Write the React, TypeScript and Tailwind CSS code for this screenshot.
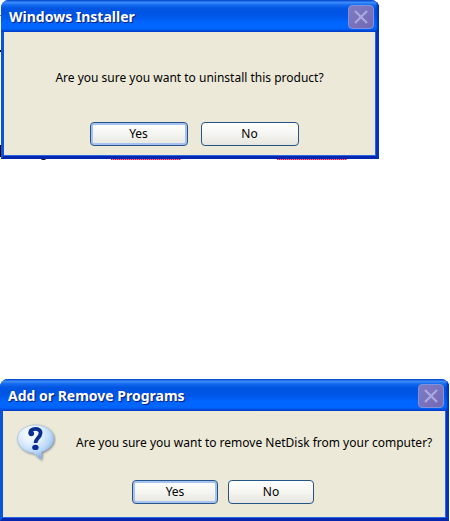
import type { ReactNode } from "react";
import clsx from "clsx";

function CloseButton() {
  return (
    <button
      aria-label="Close"
      className="flex h-6 w-[26px] shrink-0 items-center justify-center rounded-[4px] border border-[#8290e0] bg-linear-to-br from-[#7d7cc4] to-[#7468b4]"
      disabled
      type="button"
    >
      <svg aria-hidden="true" className="h-4 w-4" viewBox="0 0 16 16">
        <path d="M2 2 14 14M14 2 2 14" fill="none" stroke="#a9a8de" strokeWidth="2.4" />
      </svg>
    </button>
  );
}

function QuestionIcon() {
  return (
    <svg aria-hidden="true" className="h-10 w-10 shrink-0" viewBox="0 0 40 40">
      <defs>
        <radialGradient id="bubble" cx="38%" cy="25%" r="75%">
          <stop offset="0" stopColor="#ffffff" />
          <stop offset="0.4" stopColor="#e2f0fe" />
          <stop offset="0.75" stopColor="#b5d5f8" />
          <stop offset="1" stopColor="#7fa9dc" />
        </radialGradient>
        <filter id="bubble-shadow" x="-20%" y="-20%" width="150%" height="150%">
          <feDropShadow dx="1" dy="1" floodColor="#555f70" floodOpacity="0.75" stdDeviation="0.8" />
        </filter>
      </defs>
      <path
        d="M19.500 2C29.500 2 37.500 8 37.500 15.500C37.500 21.500 33 26.500 25.500 28.800L25 36.500L17.500 30C8.500 29.500 1.500 23 1.500 15.500C1.500 8 9.500 2 19.500 2Z"
        fill="url(#bubble)"
        filter="url(#bubble-shadow)"
        stroke="#a9c2e2"
        strokeWidth="0.7"
      />
      <path
        d="M14.500 10.500C13 4.500 25.500 4 24.500 10.500C23.900 15 19.800 15.300 19.500 20"
        fill="none"
        stroke="#0b2e94"
        strokeWidth="3.800"
      />
      <circle cx="15.300" cy="10.500" fill="#0b2e94" r="2.800" />
      <ellipse cx="19.400" cy="24.400" fill="#0b2e94" rx="3.200" ry="2.600" />
    </svg>
  );
}

type DialogButtonProps = {
  children: ReactNode;
  className: string;
  focused?: boolean;
};

function DialogButton({ children, className, focused }: DialogButtonProps) {
  return (
    <button
      className={clsx(
        "flex h-6 items-center justify-center rounded-[4px] border border-[#245488] bg-linear-to-b from-white via-[#f5f5f1] to-[#e6e5df] text-[12px] leading-4 text-black",
        focused && "shadow-[inset_0_0_0_2px_#a5c2f2]",
        className,
      )}
      type="button"
    >
      {children}
    </button>
  );
}

type DialogProps = {
  title: string;
  className?: string;
  children: ReactNode;
};

function Dialog({ title, className, children }: DialogProps) {
  return (
    <section
      aria-label={title}
      className={clsx(
        "relative overflow-hidden rounded-t-lg bg-[#0b50e2] shadow-[inset_-1px_-1px_0_#00138c]",
        className,
      )}
    >
      <header className="flex h-8 items-center justify-between bg-[linear-gradient(180deg,#0753db_0%,#3c8cfb_8%,#1268ee_16%,#0054e0_28%,#0056e8_50%,#0066ff_72%,#0066ff_88%,#0044cf_100%)] pt-0.5 pr-[5px] pl-2 shadow-[inset_-2px_0_2px_#0030b0]">
        <h2 className="font-['Noto_Sans',sans-serif] text-[14px] leading-5 font-bold text-white [text-shadow:1px_1px_1px_#0a1c78]">
          {title}
        </h2>
        <CloseButton />
      </header>
      <div className="border-t-0 border-r-[3px] border-b-[3px] border-l-[3px] border-r-[#0831b9] border-b-[#0526ad] border-l-[#0855dd]">
        <div className="border-r border-b border-[#2867e3] bg-[#ece9d8]">{children}</div>
      </div>
    </section>
  );
}

// Edges of the document that show around the first dialog.
function DocumentBehind() {
  return (
    <svg aria-hidden="true" className="absolute top-0 left-0 h-40 w-96" viewBox="0 0 384 160">
      <path d="M0 15.500H2" stroke="#777" />
      <path d="M0 51H2" stroke="#000" strokeWidth="2" />
      <path d="M0 145H2V157H0Z" fill="#000" />
      <path d="M40 158H47L45 160H42Z" fill="#222" />
      <path d="M111 159.500H181M277 159.500H347" stroke="#f58cae" />
      <path d="M111 159.500H181M277 159.500H347" stroke="#e01850" strokeDasharray="1 1" />
    </svg>
  );
}

export default function App() {
  return (
    <main className="relative min-h-screen bg-white font-['Noto_Sans',sans-serif] text-[12px] text-black">
      <DocumentBehind />
      <Dialog className="ml-px w-[84%]" title="Windows Installer">
        <p className="pt-9 text-center leading-5">Are you sure you want to uninstall this product?</p>
        <div className="flex justify-center gap-[13px] pt-[34px] pb-[9px] pl-[9px]">
          <DialogButton className="w-[98px]" focused>
            Yes
          </DialogButton>
          <DialogButton className="w-[98px]">No</DialogButton>
        </div>
      </Dialog>
      <Dialog className="mt-[220px] mr-px" title="Add or Remove Programs">
        <div className="flex items-center gap-5 pt-3 pl-[13px]">
          <QuestionIcon />
          <p className="leading-5">Are you sure you want to remove NetDisk from your computer?</p>
        </div>
        <div className="flex justify-center gap-[10px] pt-[17px] pr-0.5 pb-[13px]">
          <DialogButton className="w-[86px]" focused>
            Yes
          </DialogButton>
          <DialogButton className="w-[86px]">No</DialogButton>
        </div>
      </Dialog>
    </main>
  );
}
